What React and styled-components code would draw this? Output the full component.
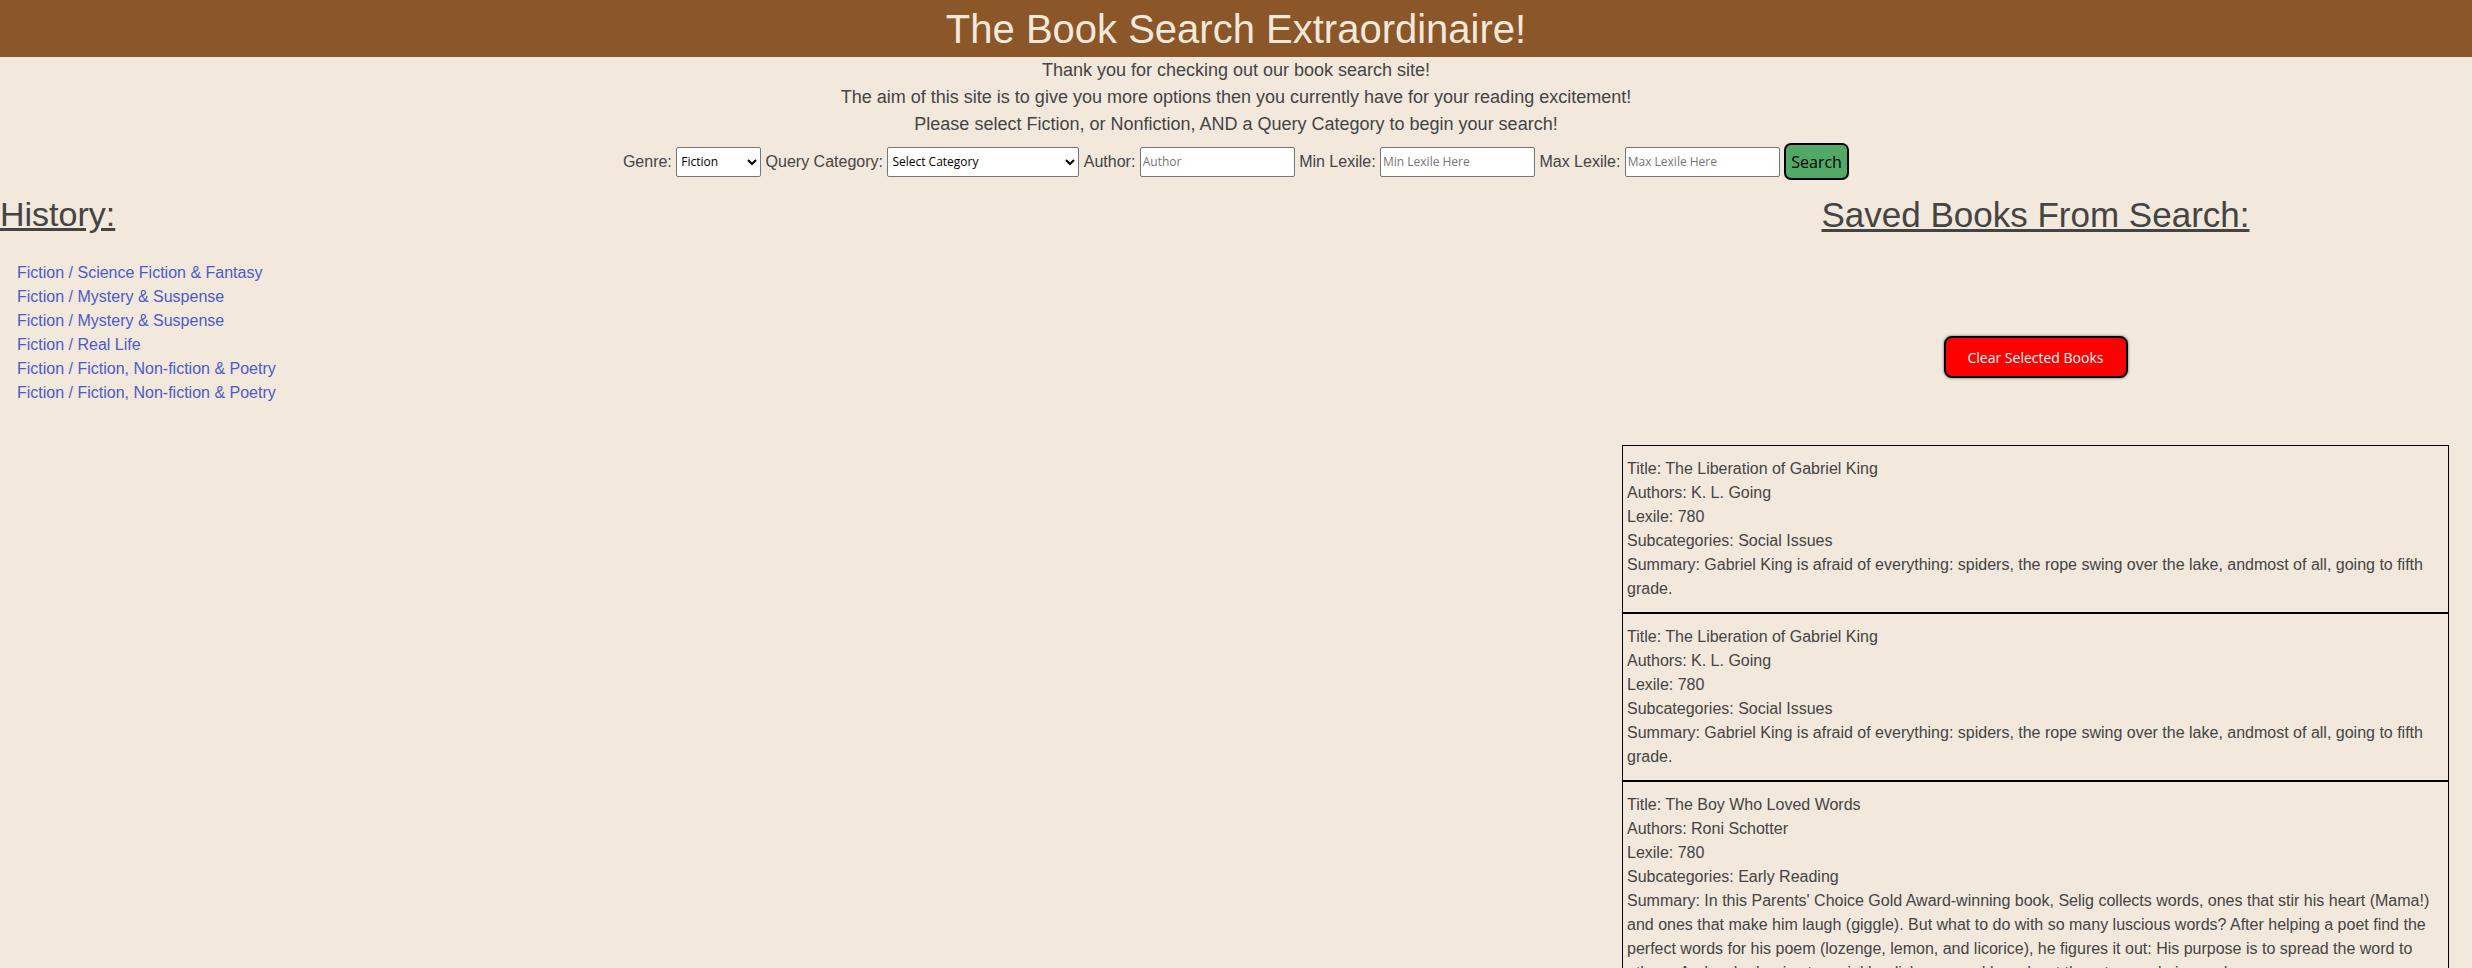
import React from 'react';
import styled, { createGlobalStyle } from 'styled-components';

const history = [
  'Fiction / Science Fiction & Fantasy',
  'Fiction / Mystery & Suspense',
  'Fiction / Mystery & Suspense',
  'Fiction / Real Life',
  'Fiction / Fiction, Non-fiction & Poetry',
  'Fiction / Fiction, Non-fiction & Poetry',
];

const books = [
  {
    title: 'The Liberation of Gabriel King',
    authors: 'K. L. Going',
    lexile: 780,
    subcategories: 'Social Issues',
    summary:
      'Gabriel King is afraid of everything: spiders, the rope swing over the lake, andmost of all, going to fifth grade.',
  },
  {
    title: 'The Liberation of Gabriel King',
    authors: 'K. L. Going',
    lexile: 780,
    subcategories: 'Social Issues',
    summary:
      'Gabriel King is afraid of everything: spiders, the rope swing over the lake, andmost of all, going to fifth grade.',
  },
  {
    title: 'The Boy Who Loved Words',
    authors: 'Roni Schotter',
    lexile: 780,
    subcategories: 'Early Reading',
    summary:
      "In this Parents' Choice Gold Award-winning book, Selig collects words, ones that stir his heart (Mama!) and ones that make him laugh (giggle). But what to do with so many luscious words? After helping a poet find the perfect words for his poem (lozenge, lemon, and licorice), he figures it out: His purpose is to spread the word to others. And so he begins to sprinkle, disburse, and broadcast them to people in need.",
  },
];

const App = () => {
  return (
    <>
      <GlobalStyle />
      <Page>
        <Header>
          <Title>The Book Search Extraordinaire!</Title>
        </Header>
        <Intro>
          <IntroLine>Thank you for checking out our book search site!</IntroLine>
          <IntroLine>The aim of this site is to give you more options then you currently have for your reading excitement!</IntroLine>
          <IntroLine>Please select Fiction, or Nonfiction, AND a Query Category to begin your search!</IntroLine>
        </Intro>
        <SearchForm>
          <Label>Genre:</Label>
          <Select $width={85} defaultValue="fiction">
            <option value="fiction">Fiction</option>
            <option value="nonfiction">Nonfiction</option>
          </Select>
          <Label>Query Category:</Label>
          <Select $width={192} defaultValue="">
            <option value="">Select Category</option>
          </Select>
          <Label>Author:</Label>
          <Input placeholder="Author" />
          <Label>Min Lexile:</Label>
          <Input placeholder="Min Lexile Here" />
          <Label>Max Lexile:</Label>
          <Input placeholder="Max Lexile Here" />
          <SearchButton>Search</SearchButton>
        </SearchForm>
        <Columns>
          <HistoryColumn>
            <SectionHeading $size={34}>History:</SectionHeading>
            <HistoryList>
              {history.map((item, i) => (
                <HistoryItem key={i}>
                  <HistoryLink href="#">{item}</HistoryLink>
                </HistoryItem>
              ))}
            </HistoryList>
          </HistoryColumn>
          <SavedColumn>
            <SectionHeading $size={35}>Saved Books From Search:</SectionHeading>
            <ClearButton>Clear Selected Books</ClearButton>
            <BookList>
              {books.map((book, i) => (
                <BookCard key={i}>
                  <div>Title: {book.title}</div>
                  <div>Authors: {book.authors}</div>
                  <div>Lexile: {book.lexile}</div>
                  <div>Subcategories: {book.subcategories}</div>
                  <div>Summary: {book.summary}</div>
                </BookCard>
              ))}
            </BookList>
          </SavedColumn>
        </Columns>
      </Page>
    </>
  );
};

const GlobalStyle = createGlobalStyle`
  body {
    margin: 0;
    background-color: #f2e8dc;
    font-family: "Liberation Sans", Arial, sans-serif;
    color: #444444;
  }
`;

const Page = styled.div`
  min-height: 968px;
  background-color: #f2e8dc;
`;

const Header = styled.header`
  height: 57px;
  background-color: #8b5628;
  display: flex;
  align-items: center;
  justify-content: center;
`;

const Title = styled.h1`
  margin: 0;
  font-size: 40px;
  font-weight: normal;
  color: #f2e8dc;
  line-height: 1;
`;

const Intro = styled.div`
  text-align: center;
  font-size: 18px;
  line-height: 27px;
`;

const IntroLine = styled.p`
  margin: 0;
`;

const SearchForm = styled.form`
  display: flex;
  align-items: center;
  justify-content: center;
  gap: 4.4px;
  margin-top: 5px;
  height: 37px;
`;

const Label = styled.label`
  font-size: 16px;
  color: #444444;
`;

const Select = styled.select`
  width: ${(p) => p.$width}px;
  height: 30px;
  font-family: "Open Sans", sans-serif;
  font-size: 12px;
  color: #000;
  background: #fff;
  border: 1px solid #767676;
  border-radius: 2px;
`;

const Input = styled.input`
  box-sizing: border-box;
  width: 155px;
  height: 30px;
  padding: 1px 2px;
  font-family: "Open Sans", sans-serif;
  font-size: 12px;
  background: #fff;
  border: 1px solid #767676;
  border-radius: 2px;

  &::placeholder {
    color: #757575;
  }
`;

const SearchButton = styled.button`
  width: 65px;
  height: 37px;
  background-color: #52a865;
  color: #000;
  border: 2px solid #000;
  border-radius: 7px;
  font-family: "Open Sans", sans-serif;
  font-size: 16px;
  padding: 0;
  cursor: pointer;
`;

const Columns = styled.main`
  display: grid;
  grid-template-columns: 1fr 827px;
  padding-right: 23px;
  margin-top: 15px;
`;

const HistoryColumn = styled.section``;

const SavedColumn = styled.section`
  display: flex;
  flex-direction: column;
  align-items: center;
`;

const SectionHeading = styled.h2`
  margin: 0;
  font-size: ${(p) => p.$size}px;
  font-weight: normal;
  text-decoration: underline;
  color: #444444;
  line-height: 39px;
`;

const HistoryList = styled.ul`
  list-style: none;
  margin: 27px 0 0;
  padding-left: 17px;
`;

const HistoryItem = styled.li`
  font-size: 16px;
  line-height: 24px;
`;

const HistoryLink = styled.a`
  color: #4b5bcf;
  text-decoration: none;
`;

const ClearButton = styled.button`
  margin-top: 102px;
  width: 184px;
  height: 42px;
  background-color: #ff0000;
  color: #fff;
  border: 2px solid #000;
  border-radius: 8px;
  box-shadow: 0 0 3px rgba(0, 0, 0, 0.6);
  font-family: "Open Sans", sans-serif;
  font-size: 14px;
  cursor: pointer;
`;

const BookList = styled.div`
  margin-top: 67px;
  align-self: stretch;
  display: flex;
  flex-direction: column;
`;

const BookCard = styled.article`
  border: 1px solid #000;
  padding: 11px 4px 11px;
  font-size: 16px;
  line-height: 24px;
  color: #444444;
`;

export default App;
